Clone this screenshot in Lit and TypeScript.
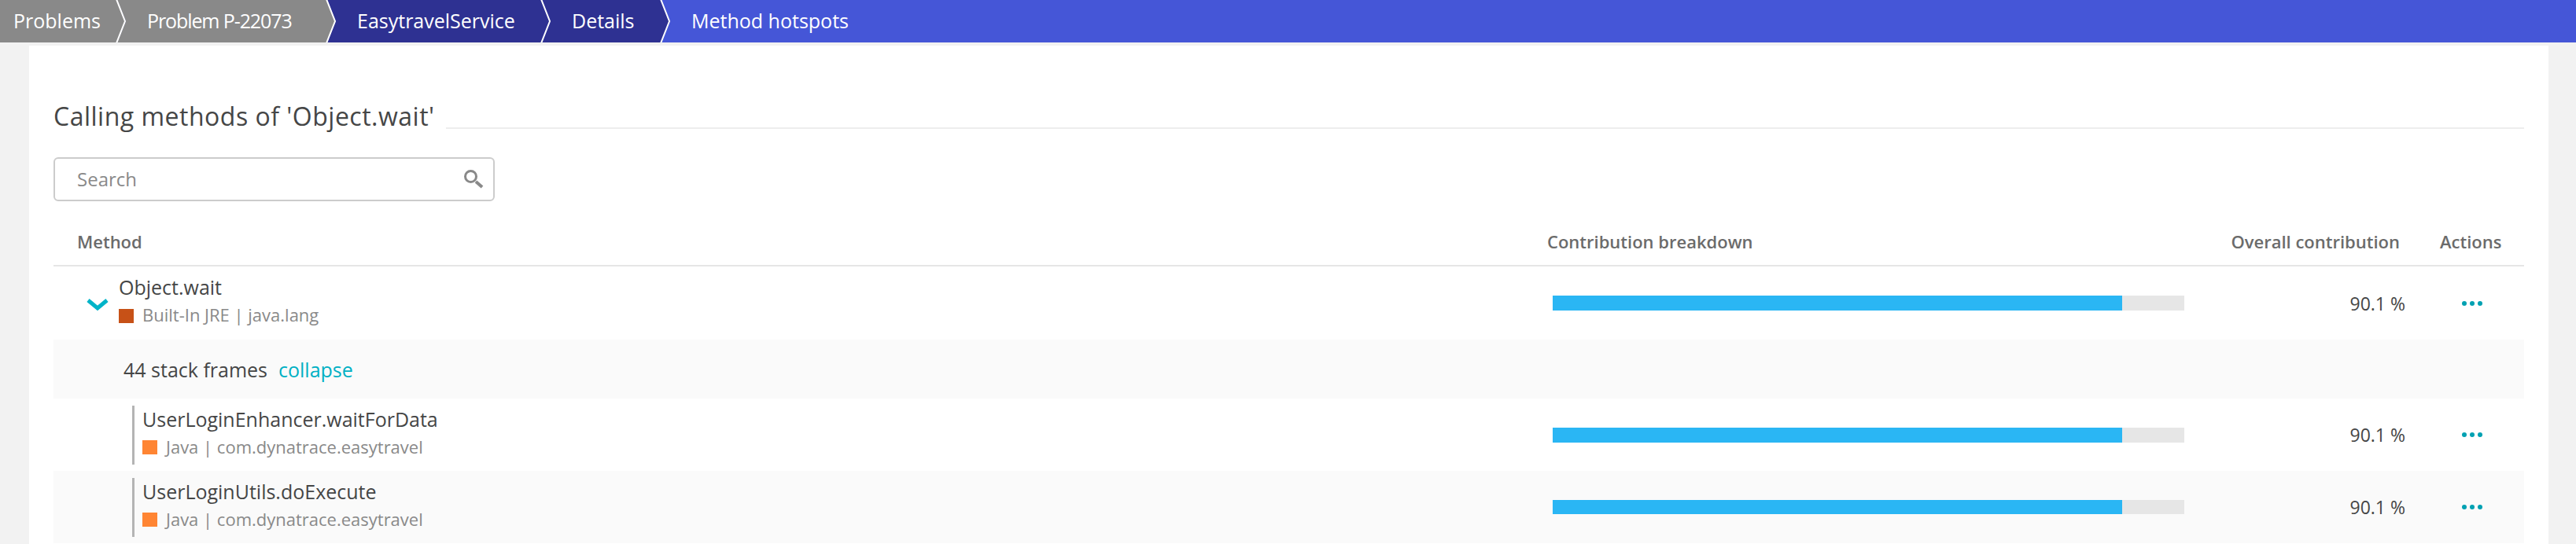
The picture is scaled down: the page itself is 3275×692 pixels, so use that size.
import { LitElement, html, css, svg } from 'lit';
import { customElement } from 'lit/decorators.js';

const GREY = '#898989';
const NAVY = '#2e3192';
const BLUE = '#4556d7';

interface Frame {
  name: string;
  tech: string;
  color: string;
  child?: boolean;
}

const crumbs = [
  { label: 'Problems', color: GREY, width: 147, cls: 'first' },
  { label: 'Problem P-22073', color: GREY, width: 253, cls: 'tight' },
  { label: 'EasytravelService', color: NAVY, width: 259, cls: '' },
  { label: 'Details', color: NAVY, width: 138, cls: '' },
];

@customElement('app-root')
export class AppRoot extends LitElement {
  static styles = css`
    :host {
      display: block;
      min-height: 692px;
      background: #f2f2f2;
      font-family: 'Open Sans', 'Noto Sans', sans-serif;
      color: #454646;
      overflow: hidden;
    }

    .crumbs {
      display: flex;
      height: 54px;
      background: #4556d7;
      color: #fff;
      font-size: 25px;
    }

    .crumb {
      display: flex;
      align-items: center;
      box-sizing: border-box;
      flex: none;
      padding: 0 0 3px 26px;
    }

    .crumb.first {
      padding-left: 17px;
    }

    .crumb.tight {
      letter-spacing: -1.1px;
    }

    .sep {
      flex: none;
      width: 14px;
      height: 54px;
    }

    .card {
      box-sizing: border-box;
      width: 3203px;
      height: 634px;
      margin: 4px 0 0 37px;
      padding: 0 31px;
      background: #fff;
    }

    .title {
      display: flex;
      align-items: flex-end;
      padding-top: 70px;
      font-size: 32px;
      line-height: 40px;
      letter-spacing: 0.5px;
    }

    .title span {
      flex: none;
      width: 499px;
    }

    .title i {
      flex: 1;
      height: 2px;
      margin-bottom: 4px;
      background: #ededed;
    }

    .search {
      display: flex;
      align-items: center;
      justify-content: space-between;
      box-sizing: border-box;
      width: 561px;
      height: 56px;
      margin-top: 32px;
      padding: 0 12px 2px 28px;
      border: 2px solid #ccc;
      border-radius: 6px;
      color: #898989;
      font-size: 24px;
    }

    .search svg {
      width: 26px;
      height: 26px;
      margin-top: 2px;
    }

    .row {
      display: grid;
      grid-template-columns: 1899px 833px 272px 137px;
      align-items: center;
    }

    .head {
      height: 83px;
      padding-top: 21px;
      box-sizing: border-box;
      border-bottom: 2px solid #e6e6e6;
      color: #6b6b6b;
      font-size: 22px;
      font-weight: 600;
    }

    .head .first {
      padding-left: 30px;
    }

    .head .overall {
      padding-right: 21px;
      text-align: right;
    }

    .head .actions {
      padding-left: 30px;
    }

    .frame {
      height: 92px;
    }

    .frame.root {
      height: 93px;
    }

    .frame.alt,
    .stack {
      background: #fafafa;
    }

    .method {
      display: flex;
      align-items: center;
    }

    .toggle {
      flex: none;
      width: 28px;
      height: 16px;
      margin: 4px 13px 0 42px;
    }

    .guide {
      flex: none;
      width: 3px;
      height: 75px;
      margin: 0 10px 0 100px;
      background: #b4b4b4;
    }

    .text {
      padding-bottom: 5px;
    }

    .name {
      font-size: 25px;
      line-height: 35px;
    }

    .tech {
      display: flex;
      align-items: center;
      gap: 11px;
      color: #898989;
      font-size: 22px;
      line-height: 35px;
    }

    .tech b {
      flex: none;
      width: 19px;
      height: 18px;
      margin-top: 2px;
    }

    .track {
      width: 803px;
      height: 19px;
      margin-left: 7px;
      background: #e6e6e6;
    }

    .frame.short .track {
      height: 18px;
    }

    .fill {
      height: 100%;
      background: #2ab6f4;
    }

    .value {
      padding-right: 14px;
      text-align: right;
      font-size: 23px;
    }

    .dots {
      display: block;
      width: 28px;
      height: 8px;
      margin-left: 57px;
    }

    .stack {
      display: flex;
      align-items: center;
      height: 75px;
      padding-left: 89px;
      font-size: 25px;
    }

    .stack a {
      margin-left: 14px;
      color: #00b0c4;
    }
  `;

  private sep(left: string, right: string) {
    return html`<svg class="sep" viewBox="0 0 14 54">
      <polygon points="0,0 2,0 13,27 2,54 0,54" fill=${left}></polygon>
      <polygon points="2,0 14,0 14,54 2,54 13,27" fill=${right}></polygon>
      ${svg`<polyline points="1,-1 12,27 1,55" fill="none" stroke="#fff" stroke-width="2"></polyline>`}
    </svg>`;
  }

  private renderFrame(f: Frame, cls: string) {
    return html`<div class="row frame ${cls}">
      <div class="method">
        ${f.child
          ? html`<div class="guide"></div>`
          : html`<svg class="toggle" viewBox="0 0 28 16">
              <polyline points="2,2 14,12 26,2" fill="none" stroke="#00b4c8" stroke-width="5"></polyline>
            </svg>`}
        <div class="text">
          <div class="name">${f.name}</div>
          <div class="tech"><b style="background:${f.color}"></b>${f.tech}</div>
        </div>
      </div>
      <div class="track"><div class="fill" style="width:90.1%"></div></div>
      <div class="value">90.1 %</div>
      <svg class="dots" viewBox="0 0 28 8">
        <circle cx="4" cy="4" r="3" fill="#00a1b2"></circle>
        <circle cx="14" cy="4" r="3" fill="#00a1b2"></circle>
        <circle cx="24" cy="4" r="3" fill="#00a1b2"></circle>
      </svg>
    </div>`;
  }

  render() {
    return html`
      <nav class="crumbs">
        ${crumbs.map((c, i) => {
          const next = crumbs[i + 1]?.color ?? BLUE;
          return html`<div class="crumb ${c.cls}" style="width:${c.width}px;background:${c.color}">${c.label}</div>
            ${this.sep(c.color, next)}`;
        })}
        <div class="crumb">Method hotspots</div>
      </nav>
      <main class="card">
        <div class="title"><span>Calling methods of 'Object.wait'</span><i></i></div>
        <div class="search">
          Search
          <svg viewBox="0 0 26 26">
            <circle cx="9.5" cy="9.5" r="7" fill="none" stroke="#898989" stroke-width="3"></circle>
            <line x1="16" y1="16" x2="24" y2="23" stroke="#898989" stroke-width="4"></line>
          </svg>
        </div>
        <div class="row head">
          <div class="first">Method</div>
          <div>Contribution breakdown</div>
          <div class="overall">Overall contribution</div>
          <div class="actions">Actions</div>
        </div>
        ${this.renderFrame({ name: 'Object.wait', tech: 'Built-In JRE | java.lang', color: '#c75117' }, 'root')}
        <div class="stack">44 stack frames <a>collapse</a></div>
        ${this.renderFrame(
          { name: 'UserLoginEnhancer.waitForData', tech: 'Java | com.dynatrace.easytravel', color: '#ff8533', child: true },
          ''
        )}
        ${this.renderFrame(
          { name: 'UserLoginUtils.doExecute', tech: 'Java | com.dynatrace.easytravel', color: '#ff8533', child: true },
          'alt short'
        )}
      </main>
    `;
  }
}
